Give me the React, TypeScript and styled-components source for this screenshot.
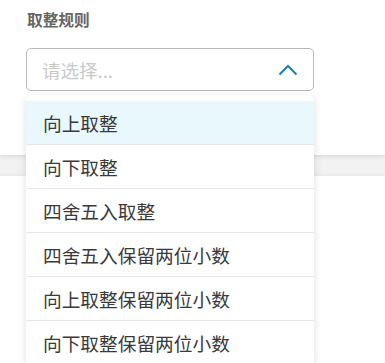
import React from "react";
import styled, { createGlobalStyle } from "styled-components";

const GlobalStyle = createGlobalStyle`
  html, body {
    margin: 0;
    padding: 0;
    background: #ffffff;
    font-family: "Noto Sans CJK SC", "Noto Sans", sans-serif;
  }
`;

const Page = styled.div`
  width: 385px;
  height: 363px;
  overflow: hidden;
  background: #f2f2f2;
  display: flex;
  flex-direction: column;
  gap: 21px;
`;

const Section = styled.section<{ $grow?: boolean }>`
  position: relative;
  background: #ffffff;
  box-shadow: 0 1px 5px rgba(0, 0, 0, 0.12);
  ${(p) => (p.$grow ? "flex: 1;" : "height: 155px;")}
  z-index: ${(p) => (p.$grow ? 0 : 1)};
`;

const Field = styled.div`
  position: relative;
  padding: 9px 0 0 27px;
  width: 288px;
`;

const Label = styled.div`
  font-size: 15.7px;
  font-weight: 600;
  color: #666666;
  line-height: 22px;
  margin-bottom: 17px;
`;

const Select = styled.div`
  box-sizing: border-box;
  margin-left: -1px;
  width: 288px;
  height: 43px;
  border: 1px solid #b9b9b9;
  border-radius: 5px;
  display: flex;
  align-items: center;
  justify-content: space-between;
  padding: 0 15px 0 15px;
`;

const Placeholder = styled.span`
  font-size: 18.5px;
  color: #c9c9c9;
`;

const Menu = styled.ul`
  position: absolute;
  left: 26px;
  top: 95px;
  width: 288px;
  margin: 0;
  padding: 6px 0 0;
  list-style: none;
  background: #ffffff;
  border-radius: 6px 6px 0 0;
  box-shadow: 0 2px 8px rgba(0, 0, 0, 0.13);
  z-index: 5;
`;

const Option = styled.li<{ $active?: boolean }>`
  height: 43px;
  border-bottom: 1px solid #e6e6e6;
  display: flex;
  align-items: center;
  padding-left: 17px;
  font-size: 18.7px;
  color: #3a3a3a;
  background: ${(p) => (p.$active ? "#e9f8fd" : "#ffffff")};
`;

const options = [
  "向上取整",
  "向下取整",
  "四舍五入取整",
  "四舍五入保留两位小数",
  "向上取整保留两位小数",
  "向下取整保留两位小数",
];

const Chevron = () => (
  <svg width="20" height="12" viewBox="0 0 20 12">
    <path d="M1.5 10.5 L10 2 L18.5 10.5" fill="none" stroke="#1d7fb3" strokeWidth="2" />
  </svg>
);

export default function App() {
  return (
    <>
      <GlobalStyle />
      <Page>
        <Section>
          <Field>
            <Label>取整规则</Label>
            <Select>
              <Placeholder>请选择...</Placeholder>
              <Chevron />
            </Select>
          </Field>
          <Menu>
            {options.map((o, i) => (
              <Option key={o} $active={i === 0}>
                {o}
              </Option>
            ))}
          </Menu>
        </Section>
        <Section $grow />
      </Page>
    </>
  );
}
